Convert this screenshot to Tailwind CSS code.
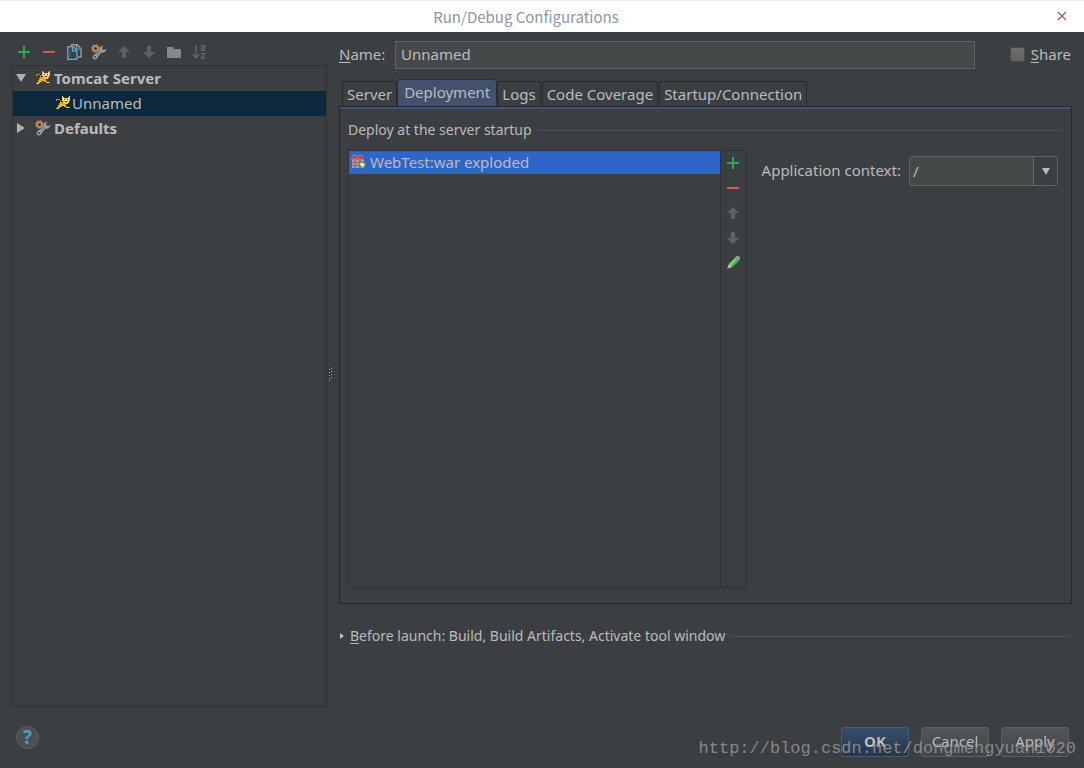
<!DOCTYPE html>
<html lang="en">
<head>
<meta charset="utf-8">
<meta name="viewport" content="width=device-width, initial-scale=1">
<title>Run/Debug Configurations</title>
<script src="https://cdn.jsdelivr.net/npm/@tailwindcss/browser@4"></script>
</head>
<body class="relative flex min-h-screen flex-col bg-[#3c3f41] font-['Noto_Sans',sans-serif] text-[15px] leading-5 text-[#bbbbbb]">

<svg class="hidden" aria-hidden="true">
  <symbol id="plus" viewBox="0 0 12 12"><path d="M5 0h2v5h5v2H7v5H5V7H0V5h5z" fill="#2fa84f"/></symbol>
  <symbol id="minus" viewBox="0 0 12 12"><path d="M0 5h12v2H0z" fill="#c75450"/><path d="M0 5h12v1H0z" fill="#d9604f"/></symbol>
  <symbol id="up" viewBox="0 0 12 12"><path d="M6 0l6 6H8v6H4V6H0z" fill="#5f6163"/></symbol>
  <symbol id="down" viewBox="0 0 12 12"><path d="M6 12L0 6h4V0h4v6h4z" fill="#5f6163"/></symbol>
  <symbol id="cat" viewBox="0 0 14 14">
    <path d="M0 3h4v1h1v2H4V4H1v1H0z" fill="#b98a1c"/>
    <path d="M3 7h1V6h3l3 2v2h1v1h3v1h-4v-1H8v-1H6v1H4v1H3v1H0v-1h1v-1h1V9h1z" fill="#d9a016"/>
    <path d="M4 8.500h3M7 9.500h2M3 10.500h2" stroke="#f5d04c"/>
    <path d="M1 12.500h2M11 11.500h2" stroke="#f8dc70"/>
    <path d="M6 0h1v1h1v1h4V1h1V0h1v5h-1v2h-1v1H8V7H7V5H6z" fill="#f0cb50"/>
    <path d="M7 2h1v2H7zM12 2h1v2h-1zM9 3h2v3H9z" fill="#fff3ae"/>
    <path d="M8 3h1v1H8zM11 3h1v1h-1zM9 5h2v1H9z" fill="#5b4514"/>
  </symbol>
  <symbol id="gearwrench" viewBox="0 0 16 16">
    <path d="M15.500 4.500l-2 1.500-2-.5L11 3.500 12.500 1.500a4 4 0 0 0-4 5L3.500 10.500a2.500 2.500 0 1 0 3 3l4-5a4 4 0 0 0 5-4z" fill="#9aa0a4"/>
    <path d="M5 11l4-4 1 1-4 4z" fill="#7c8286"/><circle cx="4" cy="13" r="1" fill="#3c3f41"/>
    <circle cx="4.500" cy="4.500" r="2.600" fill="none" stroke="#c98850" stroke-width="2"/>
    <circle cx="4.500" cy="4.500" r="3.700" fill="none" stroke="#c98850" stroke-width="1.200" stroke-dasharray="1.450 1.450"/>
  </symbol>
</svg>

<header class="flex h-8 items-center border-t border-[#ebebeb] bg-white px-4">
  <span class="w-4"></span>
  <h1 class="flex-1 pr-9 text-center font-['Noto_Sans_CJK_SC',sans-serif] text-[15px] text-[#8c95a8]">Run/Debug Configurations</h1>
  <button type="button" aria-label="Close" class="flex h-4 w-3 items-center justify-center pb-[2px]">
    <svg class="size-[10px]" viewBox="0 0 10 10" fill="none" stroke="#97565f" stroke-width="1.200"><path d="M1 1l8 8M9 1l-8 8"/></svg>
  </button>
</header>

<main class="flex flex-1 pr-3 pl-3">
  <aside class="flex w-[315px] shrink-0 flex-col">
    <div class="flex h-[33px] items-center pt-[7px]" role="toolbar" aria-label="Configurations">
      <button type="button" aria-label="Add" class="flex w-6 justify-center"><svg class="size-3"><use href="#plus"/></svg></button>
      <button type="button" aria-label="Remove" class="flex w-[25px] justify-center"><svg class="size-3"><use href="#minus"/></svg></button>
      <button type="button" aria-label="Copy" class="flex w-[25px] justify-center">
        <svg class="size-4" viewBox="0 0 16 16" fill="none"><path d="M5.500 2V.7h5.500l4 4V13h-3" stroke="#999da0" stroke-width="1.400"/><path d="M10.500 1v4h4" stroke="#999da0"/><path d="M1.700 2.700h5.500l3.600 3.600v9H1.700z" fill="#3c3f41" stroke="#5d9fc5" stroke-width="1.500"/><path d="M6.500 3v4h4" stroke="#5d9fc5" stroke-width="1.400"/><path d="M4 6v7" stroke="#4d7285"/></svg>
      </button>
      <button type="button" aria-label="Edit defaults" class="flex w-[25px] justify-center"><svg class="size-4"><use href="#gearwrench"/></svg></button>
      <button type="button" aria-label="Move up" class="flex w-[25px] justify-center"><svg class="size-3"><use href="#up"/></svg></button>
      <button type="button" aria-label="Move down" class="flex w-[25px] justify-center"><svg class="size-3"><use href="#down"/></svg></button>
      <button type="button" aria-label="New folder" class="flex w-[25px] justify-center"><svg class="h-3 w-[14px]" viewBox="0 0 14 12"><path d="M0 1h6l1 2h7v9H0z" fill="#7f898f"/></svg></button>
      <button type="button" aria-label="Sort alphabetically" class="flex w-[25px] justify-center">
        <svg class="h-4 w-[14px]" viewBox="0 0 14 16" fill="none" stroke="#66686a" stroke-width="1.300"><path d="M4 1v12M.5 10L4 13.500 7.500 10M9 1.700h3.500V6.400H9.400V3.800h3M9 9.700h3.600L9.200 14h3.900"/></svg>
      </button>
    </div>
    <ul role="tree" aria-label="Run configurations" class="flex-1 border border-[#2f3133]">
      <li role="treeitem" aria-expanded="true" class="flex h-[25px] items-center pb-[2px] pl-[3px] font-bold">
        <svg class="mr-[10px] h-2 w-[10px]" viewBox="0 0 10 8"><path d="M0 0h10L5 8z" fill="#b0b0b0"/></svg>
        <svg class="mr-1 size-[14px]"><use href="#cat"/></svg>Tomcat Server</li>
      <li role="treeitem" aria-selected="true" class="flex h-[25px] items-center bg-[#0d293e] pb-[2px] pl-[43px]"><svg class="mr-[2px] size-[14px]"><use href="#cat"/></svg>Unnamed</li>
      <li role="treeitem" aria-expanded="false" class="flex h-[25px] items-center pb-[2px] pl-1 font-bold">
        <svg class="mr-[10px] h-[10px] w-2" viewBox="0 0 8 10"><path d="M0 0l8 5-8 5z" fill="#b0b0b0"/></svg>
        <svg class="mr-[3px] size-4"><use href="#gearwrench"/></svg>Defaults</li>
    </ul>
  </aside>

  <div class="flex w-3 shrink-0 items-center pt-2 pl-[1px]" role="separator" aria-orientation="vertical">
    <svg class="h-[14px] w-[5px]" viewBox="0 0 5 14">
      <path d="M0 0h1v1H0zM2 1h1v1H2zM0 3h1v1H0zM2 4h1v1H2zM0 6h1v1H0zM2 7h1v1H2zM0 9h1v1H0zM2 10h1v1H2zM0 12h1v1H0z" fill="#1c1e1f"/>
      <path d="M1 2h1v1H1zM3 1h1v1H3zM1 5h1v1H1zM3 4h1v1H3zM1 8h1v1H1zM3 7h1v1H3zM1 11h1v1H1zM3 10h1v1H3zM1 13h1v1H1z" fill="#a5a7a8"/>
    </svg>
  </div>

  <section class="flex min-w-0 flex-1 flex-col pt-[9px]">
    <div class="flex items-center">
      <label for="name" class="w-14 shrink-0 pb-[2px]"><span class="underline underline-offset-2">N</span>ame:</label>
      <input id="name" type="text" value="Unnamed" class="h-7 min-w-0 flex-1 border border-[#646464] bg-[#45494a] px-[5px] pb-[2px] text-[#bbbbbb] outline-none">
      <label class="ml-[35px] flex items-center gap-[6px] pr-[1px] pb-[2px]">
        <input type="checkbox" class="size-[15px] appearance-none rounded-[2px] border border-[#4a4c4e] bg-linear-to-b from-[#6f6f6f] to-[#616161]">
        <span><span class="underline underline-offset-2">S</span>hare</span>
      </label>
    </div>

    <div role="tablist" class="mt-[10px] flex items-end pl-[3px]">
      <button type="button" role="tab" aria-selected="false" class="h-[25px] rounded-t-[3px] border border-b-0 border-[#27292b] px-1">Server</button>
      <button type="button" role="tab" aria-selected="true" class="h-[27px] rounded-t-[3px] border border-b-0 border-[#2c303a] bg-[#43516d] px-[6px] pb-[2px]">Deployment</button>
      <button type="button" role="tab" aria-selected="false" class="mr-[1px] h-[25px] rounded-t-[3px] border border-b-0 border-[#27292b] px-1">Logs</button>
      <button type="button" role="tab" aria-selected="false" class="mr-[1px] h-[25px] rounded-t-[3px] border border-b-0 border-[#27292b] px-1">Code Coverage</button>
      <button type="button" role="tab" aria-selected="false" class="h-[25px] rounded-t-[3px] border border-b-0 border-[#27292b] px-1">Startup/Connection</button>
    </div>

    <div role="tabpanel" aria-label="Deployment" class="flex flex-1 flex-col border border-[#27292b]">
      <div class="h-[2px] bg-[#43516d]"></div>
      <div class="flex flex-1 flex-col pt-[11px] pr-[10px] pb-[15px] pl-2">
        <div class="flex items-center gap-[6px]"><h2 class="text-[14px] leading-5">Deploy at the server startup</h2><div class="h-px flex-1 bg-[#515151]"></div></div>
        <div class="mt-[10px] flex flex-1 gap-[15px]">
          <div class="flex flex-1 border border-[#2f3133]">
            <ul role="listbox" aria-label="Artifacts to deploy" class="flex-1">
              <li role="option" aria-selected="true" class="flex h-[23px] items-center gap-1 bg-[#2f65ca] pb-[2px] pl-[2px]">
                <svg class="size-[15px]" viewBox="0 0 15 15">
                  <path d="M1 5h12v9H1z" fill="#a7a0aa"/><path d="M1 8h12v1H1zM1 11h12v1H1z" fill="#76717c"/>
                  <path d="M0 4h13v2H0zM3 6h2v8H3zM8 6h2v8H8z" fill="#d95f5d"/>
                  <path d="M6.500 4L5 1.500H2V3M6.500 4L8 1.500h3V3" fill="none" stroke="#d95f5d" stroke-width="1.300"/>
                  <circle cx="11.200" cy="11.200" r="3.600" fill="#438ba8"/><path d="M9 9h4l1 2-3 3-1-2-1-1z" fill="#e9df65"/><path d="M10 9h2v2h-2z" fill="#fff6b0"/>
                </svg>WebTest:war exploded</li>
            </ul>
            <div role="toolbar" aria-label="Artifacts" class="flex w-[26px] flex-col border-l border-[#2f3133]">
              <button type="button" aria-label="Add artifact" class="flex h-6 items-center justify-center"><svg class="size-3"><use href="#plus"/></svg></button>
              <button type="button" aria-label="Remove artifact" class="flex h-[25px] items-center justify-center"><svg class="size-3"><use href="#minus"/></svg></button>
              <button type="button" aria-label="Move artifact up" class="flex h-[25px] items-center justify-center"><svg class="size-3"><use href="#up"/></svg></button>
              <button type="button" aria-label="Move artifact down" class="flex h-[25px] items-center justify-center"><svg class="size-3"><use href="#down"/></svg></button>
              <button type="button" aria-label="Edit artifact" class="flex h-[25px] items-center justify-center">
                <svg class="size-[13px]" viewBox="0 0 13 13"><path d="M0 13l2-5 3 3z" fill="#ddc9a5"/><path d="M0 13l1-2 1 1z" fill="#555"/><path d="M1.500 8l6-6 4 3.500-6.500 6z" fill="#49b356"/><path d="M2.500 8.500l6-6 1 1-6 6z" fill="#8ee08d"/><path d="M7.500 2l2-2h2L13 1v2l-2 2.500z" fill="#86a686"/><path d="M11 0h1l1 1v1z" fill="#c9595b"/></svg>
              </button>
            </div>
          </div>
          <div class="flex h-[42px] items-center pr-[3px]">
            <label for="context" class="mr-2 pb-[2px]">Application context:</label>
            <div class="relative">
              <select id="context" class="block h-[30px] w-[149px] appearance-none rounded-[3px] border border-[#646464] bg-[#45494a] px-[3px] pb-[1px] text-[#bbbbbb] outline-none"><option>/</option></select>
              <div class="pointer-events-none absolute inset-y-px right-px flex w-6 items-center justify-center rounded-r-[2px] border-l border-[#646464] bg-[#3c3f41]">
                <svg class="h-[7px] w-2" viewBox="0 0 8 7"><path d="M0 0h8L4 7z" fill="#bbbbbb"/></svg>
              </div>
            </div>
          </div>
        </div>
      </div>
    </div>

    <div class="mt-[22px] mb-[61px] flex items-center pr-[3px]">
      <button type="button" aria-expanded="false" class="mr-[6px] flex items-center gap-[6px] pl-[1px]">
        <svg class="h-[6px] w-1" viewBox="0 0 4 6"><path d="M0 0l4 3-4 3z" fill="#bbbbbb"/></svg>
        <span class="text-[14px] leading-5"><span class="underline underline-offset-2">B</span>efore launch: Build, Build Artifacts, Activate tool window</span>
      </button>
      <div class="h-px flex-1 bg-[#515151]"></div>
    </div>
  </section>
</main>

<footer class="flex h-[61px] items-center gap-3 pr-[15px] pl-4">
  <button type="button" aria-label="Help" class="mr-auto flex size-[23px] items-center justify-center rounded-full border border-[#5e6162] bg-[#4c5052] pb-[1px] text-[19px] font-bold text-[#4a9cc9]">?</button>
  <button type="button" class="mt-[9px] h-[30px] w-[68px] rounded-[3px] border border-[#4c5b6d] bg-linear-to-b from-[#374d68] to-[#27374c] pb-[2px] font-bold">OK</button>
  <button type="button" class="mt-[9px] h-[30px] w-[68px] rounded-[3px] border border-[#5e6162] bg-linear-to-b from-[#515658] to-[#414547] pb-[2px]">Cancel</button>
  <button type="button" class="mt-[9px] h-[30px] w-[68px] rounded-[3px] border border-[#5e6162] bg-linear-to-b from-[#515658] to-[#414547] pb-[2px]">Apply</button>
</footer>

<p class="pointer-events-none absolute right-2 bottom-[9px] font-['Liberation_Mono',monospace] text-[17px] text-[#a0a0a0]/75">http://blog.csdn.net/dongmengyuan1020</p>
</body>
</html>
